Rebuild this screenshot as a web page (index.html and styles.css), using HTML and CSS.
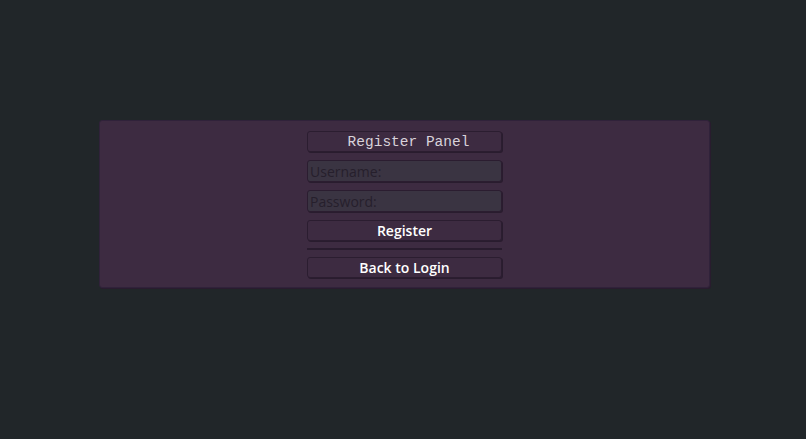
FILE: index.html
```html
<!DOCTYPE html>
<html>
<head>
<meta charset="utf-8">
<link rel="stylesheet" href="styles.css">
</head>
<body>
<div class="panel">
  <div class="column">
    <div class="title">Register Panel</div>
    <input class="field" type="text" placeholder="Username:">
    <input class="field" type="password" placeholder="Password:">
    <button class="btn">Register</button>
    <div class="sep"></div>
    <button class="btn">Back to Login</button>
  </div>
</div>
</body>
</html>
```
FILE: styles.css
```css
html, body {
  margin: 0;
  padding: 0;
  background: #212629;
  width: 806px;
  height: 439px;
  overflow: hidden;
}
body {
  padding: 120px 0 0 99px;
  box-sizing: border-box;
}
.panel {
  width: 611px;
  height: 168px;
  box-sizing: border-box;
  background: #3d2b41;
  border: 1px solid #30223a;
  border-radius: 3px;
  box-shadow: 1px 1px 0 #291c2e;
  display: flex;
  justify-content: center;
  padding-top: 10px;
}
.column {
  width: 195px;
  display: flex;
  flex-direction: column;
}
.title, .btn, .field {
  box-sizing: border-box;
  width: 195px;
  border: 1px solid #2b1d30;
  border-radius: 3px;
  box-shadow: 1px 1px 0 #291c2e;
  margin: 0;
}
.title {
  height: 21px;
  background: #3d2b41;
  color: #d8d2da;
  font-family: "Liberation Mono", monospace;
  font-size: 14.5px;
  line-height: 21px;
  text-align: center;
  padding-left: 8px;
  margin-bottom: 8px;
}
.field {
  height: 22px;
  background: #3a3442;
  font-family: "Open Sans", sans-serif;
  font-size: 14px;
  color: #e0e0e0;
  padding: 0 2px;
  outline: none;
  margin-bottom: 8px;
}
.field::placeholder {
  color: #261f2c;
}
.btn {
  height: 21px;
  background: #3d2b41;
  color: #ffffff;
  font-family: "Open Sans", sans-serif;
  font-weight: 600;
  font-size: 14px;
  line-height: 18px;
  padding: 0;
  text-align: center;
}
.sep {
  height: 2px;
  background: #291c2e;
  margin: 7px 0 7px 0;
  width: 195px;
}
```
